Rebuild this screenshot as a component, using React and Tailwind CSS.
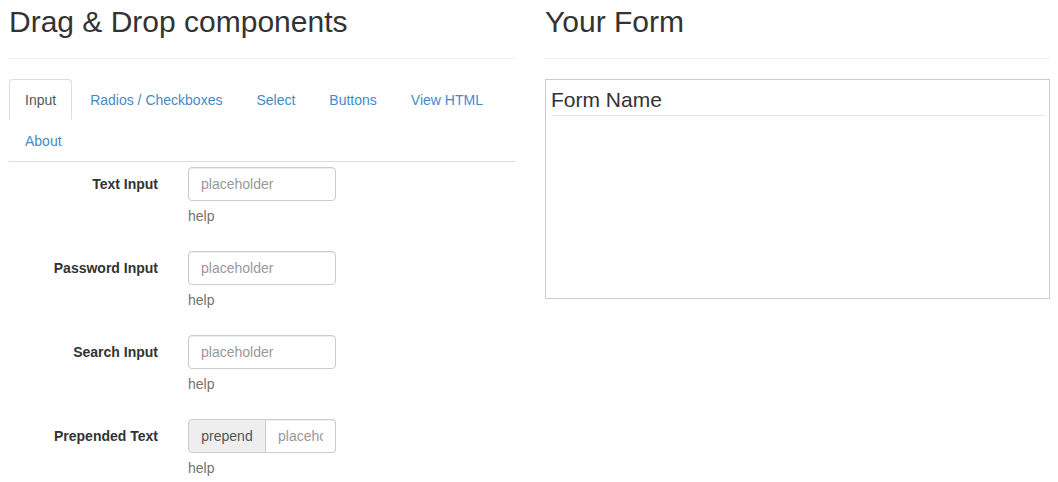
const tabs = ["Input", "Radios / Checkboxes", "Select", "Buttons", "View HTML", "About"];

const fields = [
  { label: "Text Input", type: "text" },
  { label: "Password Input", type: "password" },
  { label: "Search Input", type: "search" },
  { label: "Prepended Text", type: "prepend" },
];

const inputCls =
  "h-[34px] border border-[#ccc] px-[12px] text-[14px] text-[#555] bg-white outline-none placeholder:text-[#999] shadow-[inset_0_1px_1px_rgba(0,0,0,0.075)]";

function Field({ label, type }) {
  return (
    <div className="flex mb-[25px]">
      <label className="w-[149px] shrink-0 text-right font-bold text-[14px] leading-5 pt-[7px] text-[#333]">
        {label}
      </label>
      <div className="ml-[30px] w-[148px]">
        {type === "prepend" ? (
          <div className="flex">
            <span className="h-[34px] w-[78px] shrink-0 flex items-center justify-center bg-[#eee] border border-[#ccc] rounded-l text-[14px] text-[#555]">
              prepend
            </span>
            <input
              className={`${inputCls} border-l-0 rounded-r min-w-0 flex-1`}
              placeholder="placeholder"
            />
          </div>
        ) : (
          <input type={type} className={`${inputCls} rounded w-full`} placeholder="placeholder" />
        )}
        <p className="mt-[5px] text-[14px] leading-5 text-[#737373]">help</p>
      </div>
    </div>
  );
}

export default function App() {
  return (
    <div className="bg-white min-h-[482px] pl-[9px] pr-[8px] grid grid-cols-[506px_505px] gap-x-[30px] text-[#333] font-['Liberation_Sans',Arial,sans-serif]">
      <div>
        <h2 className="pt-[5px] text-[30px] leading-[33px]">Drag &amp; Drop components</h2>
        <hr className="mt-[20px] border-0 border-t border-[#eee]" />
        <ul className="mt-[20px] flex flex-wrap border-b border-[#ddd]">
          {tabs.map((t, i) => (
            <li key={t} className="mr-[2px]">
              <a
                className={
                  i === 0
                    ? "block h-[41px] px-[15px] py-[10px] leading-5 text-[14px] text-[#555] bg-white border border-[#ddd] border-b-transparent rounded-t"
                    : "block h-[41px] px-[15px] py-[10px] leading-5 text-[14px] text-[#428bca] border border-transparent rounded-t"
                }
              >
                {t}
              </a>
            </li>
          ))}
        </ul>
        <div className="pt-[5px]">
          {fields.map((f) => (
            <Field key={f.label} {...f} />
          ))}
        </div>
      </div>
      <div>
        <h2 className="pt-[5px] text-[30px] leading-[33px]">Your Form</h2>
        <hr className="mt-[20px] border-0 border-t border-[#eee]" />
        <div className="mt-[20px] h-[220px] border border-[#ccc] p-[5px]">
          <div className="text-[21px] leading-[30px] border-b border-[#e5e5e5] text-[#333]">Form Name</div>
        </div>
      </div>
    </div>
  );
}
